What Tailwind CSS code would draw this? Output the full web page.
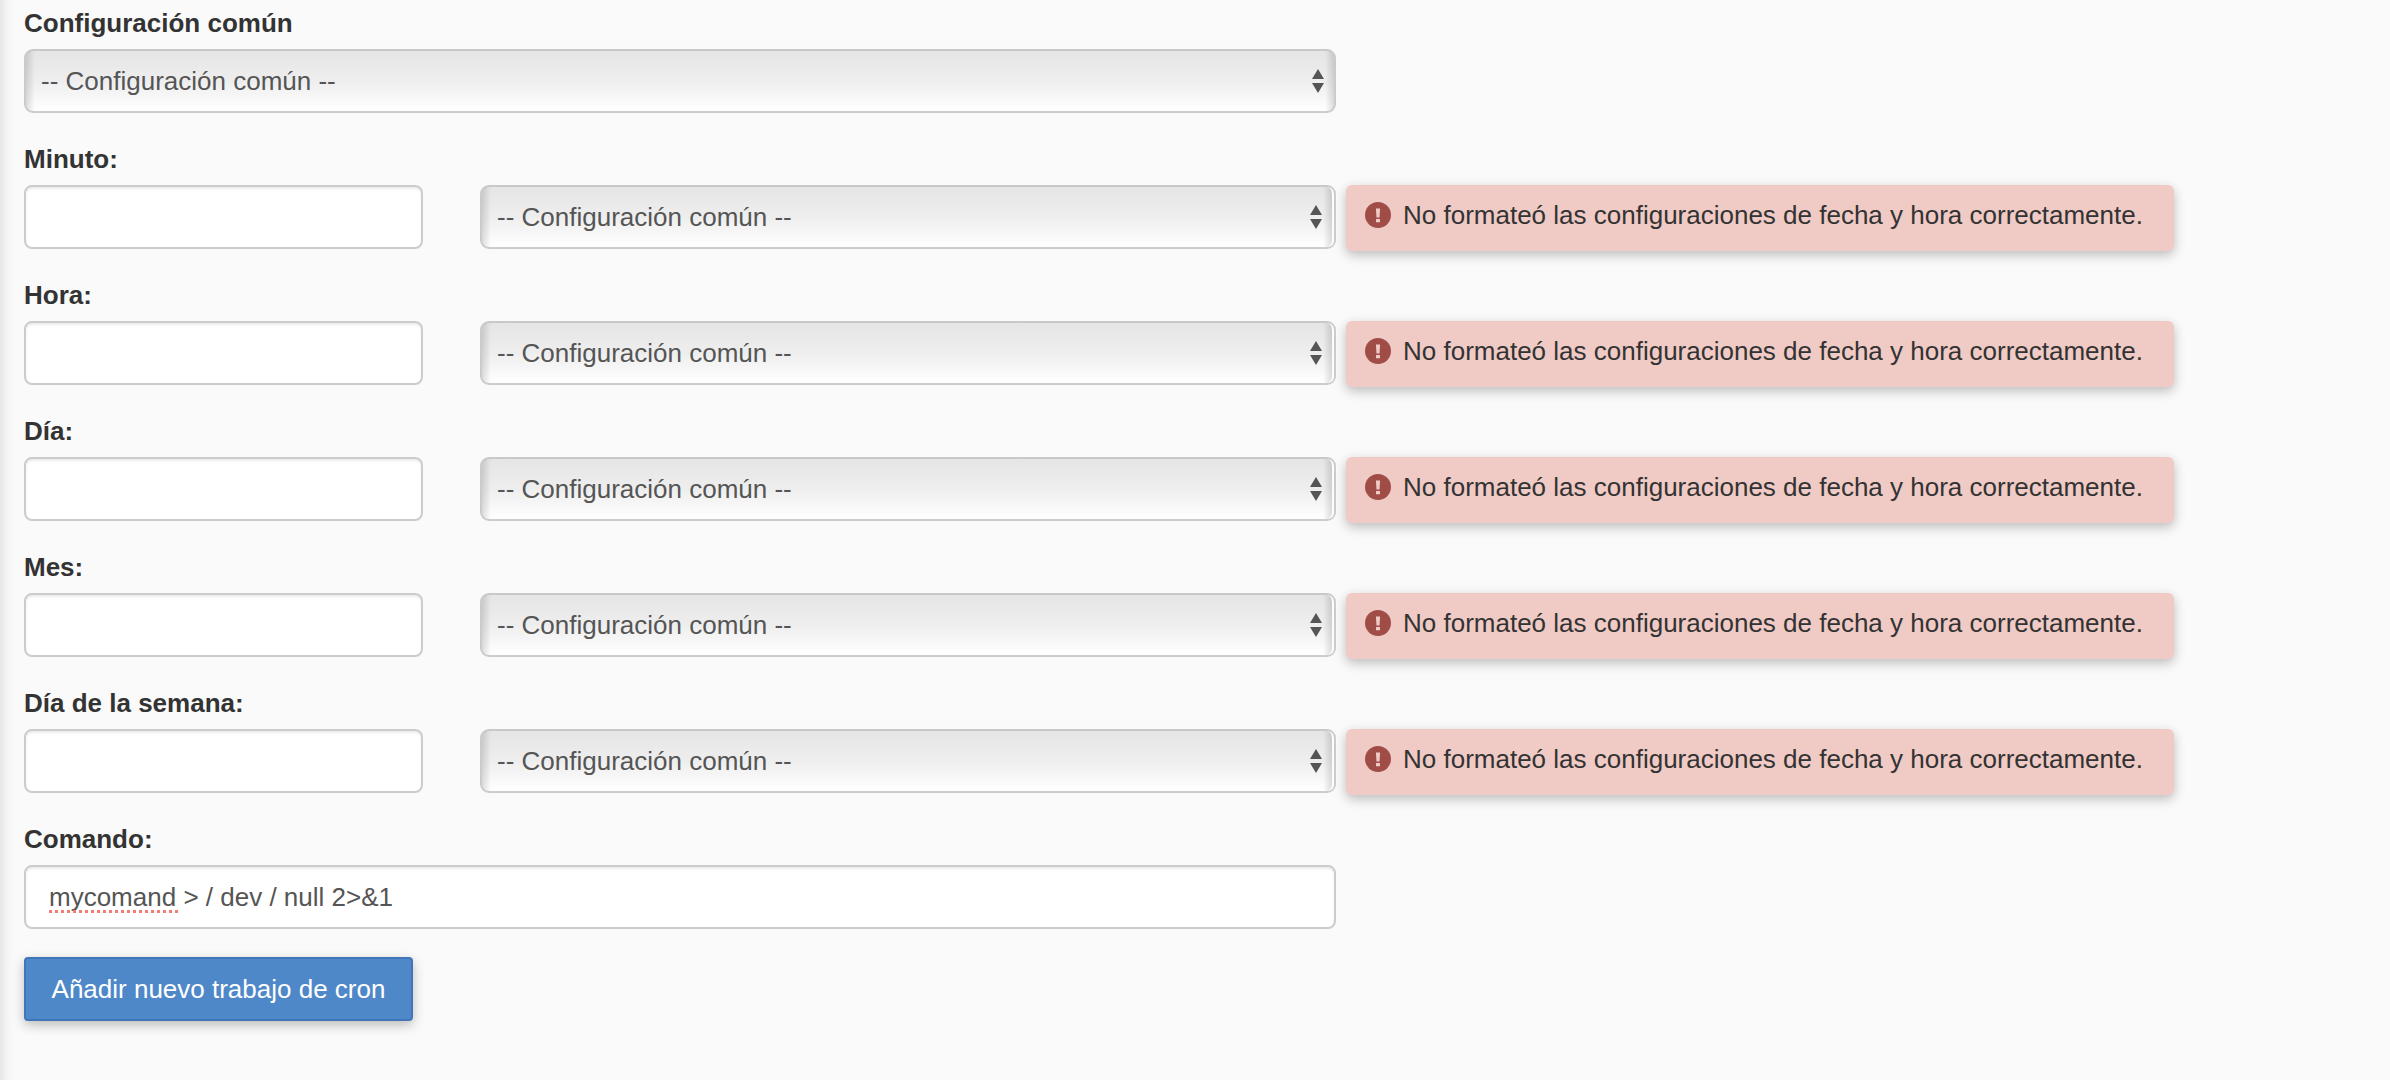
<!DOCTYPE html>
<html lang="es">
<head>
    <meta charset="UTF-8">
    <meta name="viewport" content="width=device-width, initial-scale=1.0">
    <title>Añadir nuevo trabajo de cron</title>
    <script src="https://cdn.jsdelivr.net/npm/@tailwindcss/browser@4"></script>
</head>
<body class="min-h-screen bg-[#fafafa] font-['Liberation_Sans',Arial,sans-serif] text-[26px] leading-9 text-[#333] shadow-[inset_16px_0_16px_-16px_rgba(0,0,0,0.16)]">
    <form class="flex flex-col gap-7 pt-[5px] pb-8 pl-6 pr-6">
        <div>
            <label for="common" class="block font-bold mb-2">Configuración común</label>
            <div class="relative max-w-[1312px]">
                <select id="common" class="block w-full h-16 appearance-none rounded-[9px] border-2 border-t-[#c8c8c8] border-x-[#cbcbcb] border-b-[#cccccc] pl-[15px] pr-12 text-[#555] bg-[linear-gradient(90deg,rgba(0,0,0,0.13),transparent_9px),linear-gradient(270deg,rgba(0,0,0,0.13),transparent_9px),linear-gradient(180deg,#e5e5e5,#eeeeee_50%,#fff)]">
                    <option>-- Configuración común --</option>
                </select>
                <svg class="absolute right-3 top-5 w-3 h-6 pointer-events-none" viewBox="0 0 12 24" fill="#555"><path d="M6 0l6 10H0zM0 14h12L6 24z"/></svg>
            </div>
        </div>

        <!-- Minuto, hora, día, mes y día de la semana -->
        <div id="fields" class="flex flex-col gap-7"></div>

        <div>
            <label for="command" class="block font-bold mb-2">Comando:</label>
            <div class="relative max-w-[1312px]">
                <input type="text" id="command" value="mycomand &gt; / dev / null 2&gt;&amp;1" spellcheck="false"
                       class="block w-full h-16 rounded-lg border-2 border-[#ccc] bg-white px-[23px] text-[#555] shadow-[inset_0_2px_2px_rgba(0,0,0,0.075)]">
                <span class="absolute left-[25px] top-[45px] w-[129px] border-b-[3px] border-dotted border-[#f47c74] pointer-events-none"></span>
            </div>
        </div>

        <button type="submit" class="self-start min-w-[389px] h-16 rounded-sm border-2 border-[#3f76b8] bg-[#4f88c9] px-[23px] text-white shadow-[0_4px_12px_rgba(0,0,0,0.25)]">Añadir nuevo trabajo de cron</button>
    </form>

    <script>
        const fields = [
            { id: 'minute', label: 'Minuto:' },
            { id: 'hour', label: 'Hora:' },
            { id: 'day', label: 'Día:' },
            { id: 'month', label: 'Mes:' },
            { id: 'weekday', label: 'Día de la semana:' },
        ];

        document.getElementById('fields').innerHTML = fields.map(field => `
            <div>
                <label for="${field.id}" class="block font-bold mb-2">${field.label}</label>
                <div class="flex items-start gap-[10px] h-16">
                    <div class="grid grid-cols-[399fr_856fr] gap-[57px] w-[1312px] min-w-0">
                        <input type="text" id="${field.id}" class="block w-full min-w-0 h-16 rounded-lg border-2 border-[#ccc] bg-white px-[23px] text-[#555] shadow-[inset_0_2px_2px_rgba(0,0,0,0.075)]">
                        <div class="relative min-w-0">
                            <select aria-label="${field.label} configuración común" class="block w-full h-16 appearance-none rounded-[9px] border-2 border-t-[#c8c8c8] border-x-[#cbcbcb] border-b-[#cccccc] pl-[15px] pr-12 text-[#555] bg-[linear-gradient(90deg,rgba(0,0,0,0.13),transparent_9px),linear-gradient(180deg,#e5e5e5,#eeeeee_50%,#fff)]">
                                <option>-- Configuración común --</option>
                            </select>
                            <span class="absolute right-[2px] inset-y-[2px] w-3 rounded-r-[7px] border-r-2 border-[#fdfdfd] bg-[linear-gradient(270deg,rgba(0,0,0,0.13),transparent_9px)] pointer-events-none"></span>
                            <svg class="absolute right-[14px] top-5 w-3 h-6 pointer-events-none" viewBox="0 0 12 24" fill="#555"><path d="M6 0l6 10H0zM0 14h12L6 24z"/></svg>
                        </div>
                    </div>
                    <div role="alert" class="flex shrink-0 items-start gap-3 min-w-[828px] rounded-md bg-[#f0cac5] pt-3 pb-[18px] px-[19px] whitespace-nowrap shadow-[0_4px_12px_rgba(0,0,0,0.25)]">
                        <svg class="w-[26px] h-[26px] mt-[5px]" viewBox="0 0 26 26"><circle cx="13" cy="13" r="13" fill="#a04c47"/><path d="M10.9 6.5h4.2l-.6 9h-3zM11 17h4v3.2h-4z" fill="#f0cac5"/></svg>
                        <span>No formateó las configuraciones de fecha y hora correctamente.</span>
                    </div>
                </div>
            </div>
        `).join('');
    </script>
</body>
</html>
